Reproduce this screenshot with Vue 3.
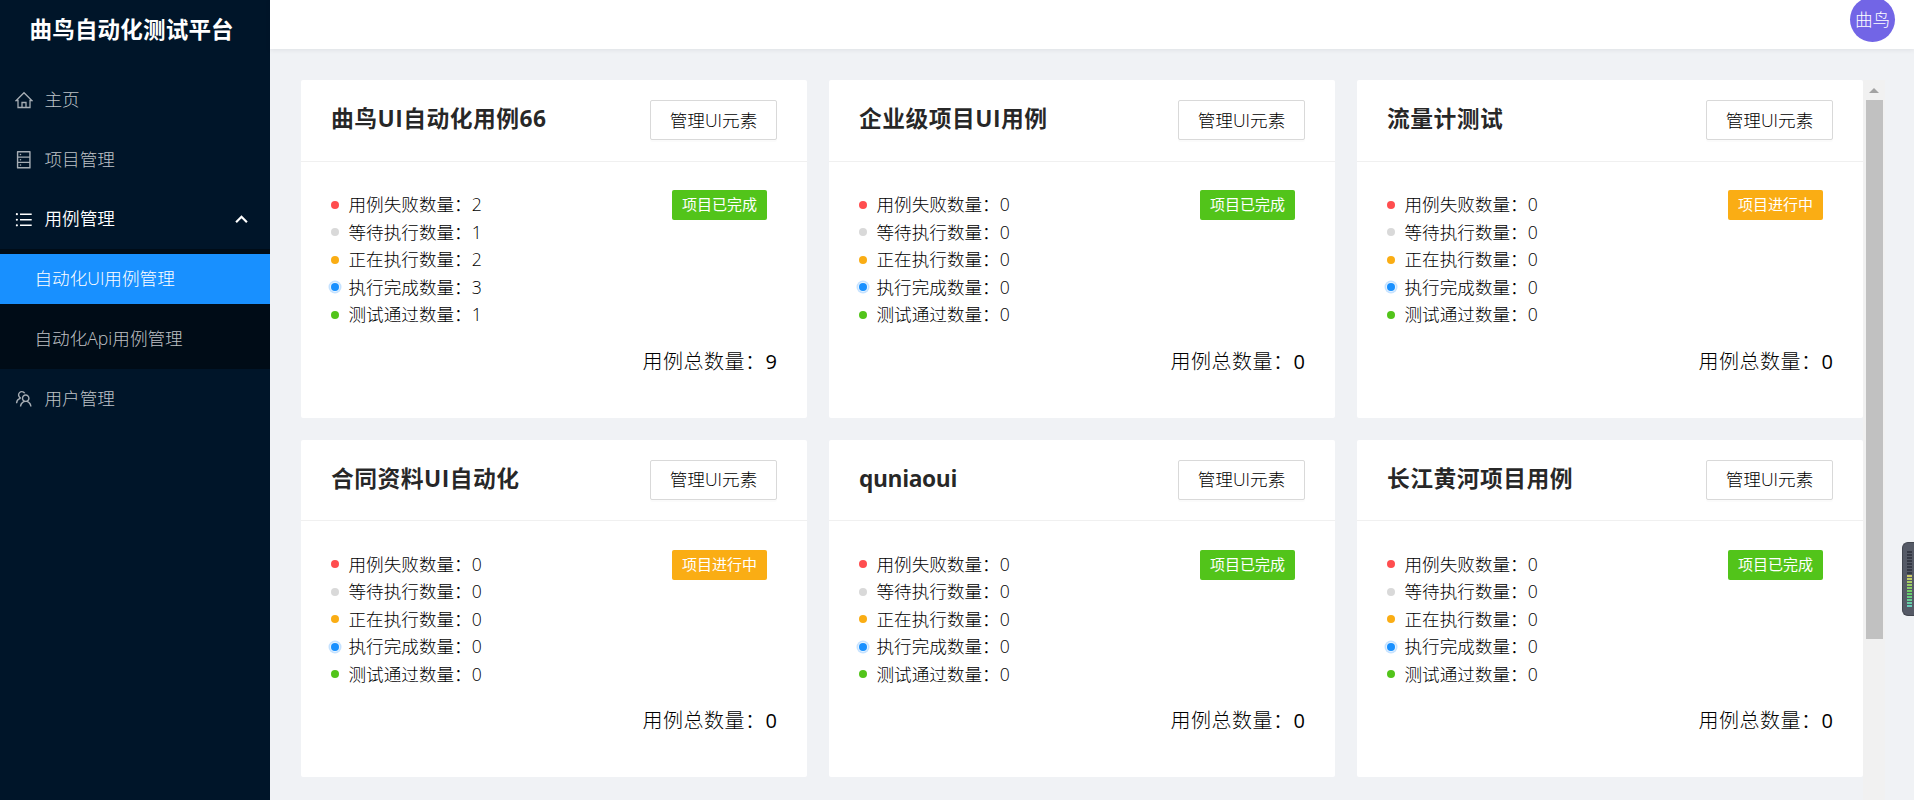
<template>
  <div class="layout">
    <aside class="sider">
      <h1 class="logo">曲鸟自动化测试平台</h1>
      <ul class="menu">
        <li class="menu-item">
          <svg class="icon home" viewBox="0 0 18 18"><path d="M3 9.500H1.200L9 1.700L16.800 9.500H15V16.500H3Z M7 16.500V11.500H11V16.500" /></svg>
          <span>主页</span>
        </li>
        <li class="menu-item">
          <svg class="icon" viewBox="64 64 896 896"><path d="M832 64H192c-17.700 0-32 14.300-32 32v832c0 17.700 14.300 32 32 32h640c17.700 0 32-14.300 32-32V96c0-17.700-14.300-32-32-32zm-600 72h560v208H232V136zm560 480H232V408h560v208zm0 272H232V680h560v208zM304 240a40 40 0 1080 0 40 40 0 10-80 0zm0 272a40 40 0 1080 0 40 40 0 10-80 0zm0 272a40 40 0 1080 0 40 40 0 10-80 0z" /></svg>
          <span>项目管理</span>
        </li>
        <li class="menu-item open">
          <svg class="icon" viewBox="64 64 896 896"><path d="M912 192H328c-4.400 0-8 3.600-8 8v56c0 4.400 3.600 8 8 8h584c4.400 0 8-3.600 8-8v-56c0-4.400-3.600-8-8-8zm0 284H328c-4.400 0-8 3.600-8 8v56c0 4.400 3.600 8 8 8h584c4.400 0 8-3.600 8-8v-56c0-4.400-3.600-8-8-8zm0 284H328c-4.400 0-8 3.600-8 8v56c0 4.400 3.600 8 8 8h584c4.400 0 8-3.600 8-8v-56c0-4.400-3.600-8-8-8zM104 228a56 56 0 10112 0 56 56 0 10-112 0zm0 284a56 56 0 10112 0 56 56 0 10-112 0zm0 284a56 56 0 10112 0 56 56 0 10-112 0z" /></svg>
          <span>用例管理</span>
          <svg class="arrow" viewBox="0 0 12 8"><path d="M1 6.500L6 1.500L11 6.500" /></svg>
        </li>
        <li class="submenu">
          <div class="sub-item active">自动化UI用例管理</div>
          <div class="sub-item">自动化Api用例管理</div>
        </li>
        <li class="menu-item">
          <svg class="icon" viewBox="64 64 896 896"><path d="M824.200 699.900a301.550 301.550 0 00-86.400-60.400C783.100 602.800 812 546.800 812 484c0-110.800-92.400-201.700-203.200-200-109.100 1.700-197 90.600-197 200 0 62.800 29 118.800 74.200 155.500a300.950 300.950 0 00-86.400 60.400C345 754.600 314 826.800 312 903.800a8 8 0 008 8.200h56c4.300 0 7.900-3.400 8-7.700 1.900-58 25.400-112.300 66.700-153.500A226.620 226.620 0 01612 684c60.900 0 118.200 23.700 161.300 66.800C814.600 792 838 846.300 840 904.300c.1 4.300 3.700 7.700 8 7.700h56a8 8 0 008-8.200c-2-77-33-149.200-87.800-203.900zM612 612c-34.200 0-66.400-13.300-90.500-37.500a126.860 126.860 0 01-37.500-91.800c.3-32.800 13.400-64.500 36.300-88 24-24.600 56.100-38.300 90.400-38.700 33.900-.3 66.800 12.900 91 36.600 24.800 24.300 38.400 56.800 38.400 91.400 0 34.200-13.300 66.300-37.500 90.500A127.300 127.300 0 01612 612zM361.500 510.400c-.9-8.700-1.400-17.500-1.400-26.400 0-15.900 1.500-31.400 4.300-46.500.7-3.600-1.200-7.300-4.500-8.800-13.600-6.100-26.100-14.500-36.900-25.100a127.540 127.540 0 01-38.700-95.400c.9-32.100 13.800-62.600 36.300-85.600 24.700-25.300 57.900-39.100 93.200-38.700 31.900.3 62.700 12.600 86 34.400 7.900 7.400 14.700 15.600 20.400 24.400 2 3.100 5.900 4.400 9.300 3.200 17.600-6.100 36.200-10.400 55.300-12.400 5.600-.6 8.800-6.600 6.300-11.600-32.500-64.300-98.900-108.700-175.700-109.900-110.900-1.700-203.300 89.200-203.300 199.900 0 62.800 28.900 118.800 74.200 155.500-31.800 14.700-61.100 35-86.500 60.400-54.800 54.700-85.800 126.900-87.800 204a8 8 0 008 8.200h56.100c4.300 0 7.900-3.400 8-7.700 1.900-58 25.400-112.300 66.700-153.500 29.400-29.400 65.400-49.800 104.700-59.700 3.900-1 6.500-4.700 6-8.700z" /></svg>
          <span>用户管理</span>
        </li>
      </ul>
    </aside>

    <div class="main">
      <header class="header">
        <div class="avatar">曲鸟</div>
      </header>
      <div class="content">
        <div class="grid">
          <div v-for="item in projects" :key="item.name" class="card">
            <div class="card-head">
              <h2 :class="{ latin: /^\w+$/.test(item.name) }">{{ item.name }}</h2>
              <button class="btn">管理UI元素</button>
            </div>
            <div class="card-body">
              <div class="card-row">
                <ul class="stats">
                  <li v-for="(s, i) in stats" :key="s.label">
                    <i :class="['dot', s.type]"></i>
                    <span>{{ s.label }}：{{ item.counts[i] }}</span>
                  </li>
                </ul>
                <span :class="['tag', item.done ? 'done' : 'doing']">{{ item.done ? '项目已完成' : '项目进行中' }}</span>
              </div>
              <p class="total">用例总数量：<b>{{ item.total }}</b></p>
            </div>
          </div>
        </div>
        <div class="scrollbar">
          <span class="scroll-up"></span>
          <div class="thumb"></div>
        </div>
      </div>
    </div>

    <div class="meter">
      <i v-for="n in 19" :key="n" :style="{ background: meterColor(n) }"></i>
    </div>
  </div>
</template>

<script setup>
import { ref } from 'vue'

const stats = [
  { label: '用例失败数量', type: 'error' },
  { label: '等待执行数量', type: 'default' },
  { label: '正在执行数量', type: 'warning' },
  { label: '执行完成数量', type: 'processing' },
  { label: '测试通过数量', type: 'success' }
]

const projects = ref([
  { name: '曲鸟UI自动化用例66', counts: [2, 1, 2, 3, 1], total: 9, done: true },
  { name: '企业级项目UI用例', counts: [0, 0, 0, 0, 0], total: 0, done: true },
  { name: '流量计测试', counts: [0, 0, 0, 0, 0], total: 0, done: false },
  { name: '合同资料UI自动化', counts: [0, 0, 0, 0, 0], total: 0, done: false },
  { name: 'quniaoui', counts: [0, 0, 0, 0, 0], total: 0, done: true },
  { name: '长江黄河项目用例', counts: [0, 0, 0, 0, 0], total: 0, done: true }
])

// the upper bars are off, the lower ones fade from yellow to teal
const meterColor = (n) => {
  if (n < 9) return '#353945'
  return `hsl(${58 + (n - 9) * 11}, 50%, 60%)`
}
</script>

<style>
html, body { margin: 0; height: 100%; overflow: hidden; }
</style>

<style scoped>
* { box-sizing: border-box; }
ul, h1, h2, p { margin: 0; padding: 0; list-style: none; }
.layout { position: relative; display: flex; height: 800px; overflow: hidden; background: #f0f2f5; color: #000; font-family: "Open Sans", "Noto Sans CJK SC", sans-serif; font-size: 17.6px; font-weight: 300; line-height: 27.5px; }

.sider { width: 270px; flex: none; background: #001529; color: rgba(255, 255, 255, 0.75); }
.logo { height: 60px; padding-left: 29.5px; color: #fff; font-size: 22.5px; font-weight: 700; line-height: 60px; letter-spacing: 0.2px; white-space: nowrap; }
.menu { padding-top: 15px; }
.menu-item { display: flex; align-items: center; height: 50px; margin-bottom: 10px; padding: 0 15px; }
.menu-item span { position: relative; top: -0.5px; }
.icon { width: 17.5px; height: 17.5px; margin-right: 12px; fill: rgba(255, 255, 255, 0.65); }
.home { width: 18px; height: 18px; margin-right: 11.5px; fill: none; stroke: rgba(255, 255, 255, 0.65); stroke-width: 1.3; }
.open { height: 54px; margin-bottom: 0; padding-bottom: 5px; color: #fff; font-weight: 350; }
.open .icon { fill: #fff; }
.arrow { width: 13px; height: 9px; margin-left: auto; margin-right: 7px; fill: none; stroke: #fff; stroke-width: 2; }
.submenu { margin-bottom: 5px; padding: 5px 0; background: #000c17; }
.sub-item { height: 50px; margin-bottom: 10px; padding-left: 34.5px; line-height: 49px; }
.sub-item:last-child { margin-bottom: 0; }
.active { background: #1890ff; color: #fff; }

.main { flex: 1; display: flex; flex-direction: column; min-width: 0; }
.header { display: flex; justify-content: flex-end; height: 49px; flex: none; padding-right: 19px; background: #fff; box-shadow: 0 1px 5px rgba(0, 21, 41, 0.08); }
.avatar { width: 45px; height: 45px; margin-top: -3px; border-radius: 50%; background: #7265e6; color: #fff; line-height: 45px; text-align: center; }
.content { flex: 1; display: flex; min-height: 0; padding: 31px 29px 0 31px; }
.grid { flex: none; display: grid; grid-template-columns: repeat(3, 506px); grid-auto-rows: 337.6px; gap: 22px; }
.card { border-radius: 2px; background: #fff; }
.card-head { display: flex; justify-content: space-between; height: 81.5px; padding: 20px 30px; border-bottom: 1px solid #f0f0f0; }
.card-head h2 { color: rgba(0, 0, 0, 0.85); font-size: 22.8px; font-weight: 700; line-height: 38px; letter-spacing: 0.45px; }
.card-head h2.latin { letter-spacing: -0.4px; }
.btn { width: 127px; height: 40px; padding: 1px 0 0; border: 1px solid #d9d9d9; border-radius: 2px; background: #fff; box-shadow: 0 2px 0 rgba(0, 0, 0, 0.016); color: inherit; font: inherit; }
.card-body { padding: 28.5px 30px 0; }
.card-row { display: flex; justify-content: space-between; align-items: flex-start; }
.stats { padding-top: 1px; }
.stats li { display: flex; align-items: center; height: 27.5px; }
.dot { width: 8px; height: 8px; margin-right: 9.5px; border-radius: 50%; }
.error { background: #ff4d4f; }
.default { background: #d9d9d9; }
.warning { background: #faad14; }
.processing { background: #1890ff; box-shadow: 0 0 0 1px #e8f4ff, 0 0 0 2.5px #c5e2ff; }
.success { background: #52c41a; }
.tag { width: 95px; height: 30px; margin-right: 10px; border-radius: 2px; color: #fff; font-size: 15px; font-weight: 400; line-height: 28px; text-align: center; }
.done { background: #52c41a; }
.doing { background: #faad14; }
.total { padding-top: 17px; font-size: 20px; line-height: 32px; letter-spacing: 0.5px; text-align: right; }
.total b { font-weight: 500; letter-spacing: 0; }

.scrollbar { width: 22px; height: 720px; background: #f1f1f1; }
.scroll-up { display: block; width: 0; margin: 0 auto; padding-top: 8px; border: solid transparent; border-width: 0 5px 5px; border-bottom-color: #a3a3a3; }
.thumb { width: 17px; height: 539px; margin: 7px 0 0 3px; background: #c1c1c1; }

.meter { position: absolute; right: 0; top: 542px; width: 12px; height: 74px; padding: 8px 2px 0 4px; border: 1px solid #42464f; border-right: 0; border-radius: 6px 0 0 6px; background: #555a66; }
.meter i { display: block; height: 2px; margin-bottom: 1px; }
</style>
